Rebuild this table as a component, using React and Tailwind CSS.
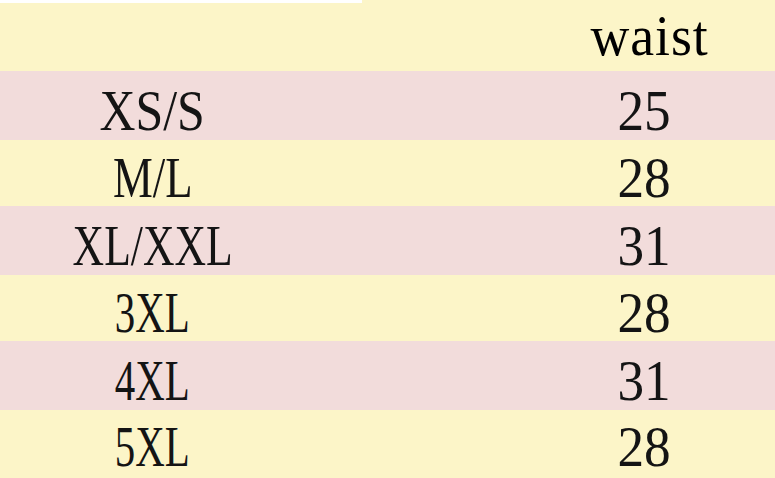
/**
 * SizeChart — waist measurements by size, striped rows.
 */

const ROWS = [
  { size: 'XS/S', waist: '25', bg: 'bg-[#f2dcdb]', h: 'h-[69px]', sx: 'scale-x-[0.89]', pt: 'pt-[10px]' },
  { size: 'M/L', waist: '28', bg: 'bg-[#fcf5c8]', h: 'h-[66px]', sx: 'scale-x-[0.8]', pt: 'pt-[10px]' },
  { size: 'XL/XXL', waist: '31', bg: 'bg-[#f2dcdb]', h: 'h-[69px]', sx: 'scale-x-[0.78]', pt: 'pt-[10px]' },
  { size: '3XL', waist: '28', bg: 'bg-[#fcf5c8]', h: 'h-[66px]', sx: 'scale-x-[0.73]', pt: 'pt-[10px]' },
  { size: '4XL', waist: '31', bg: 'bg-[#f2dcdb]', h: 'h-[69px]', sx: 'scale-x-[0.73]', pt: 'pt-[10px]' },
  { size: '5XL', waist: '28', bg: 'bg-[#fcf5c8]', h: 'h-[68px]', sx: 'scale-x-[0.73]', pt: 'pt-[6px]' },
];

export default function App() {
  return (
    <div className="w-[775px] h-[478px] overflow-hidden bg-[#fcf5c8] font-['Liberation_Serif',serif] text-[56px] leading-none text-[#141414]">
      {/* Header */}
      <div className="h-[71px] flex flex-col">
        <div className="h-[3px] w-[362px] bg-white" />
        <div className="flex-1 grid grid-cols-[305px_1fr]">
          <div />
          <div className="pl-[208px] pt-[5px] flex justify-center">
            <span className="inline-block ml-[12px] scale-x-[0.96] tracking-[1px] text-black">waist</span>
          </div>
        </div>
      </div>

      {/* Rows */}
      {ROWS.map((row) => (
        <div key={row.size} className={`${row.bg} ${row.h} grid grid-cols-[305px_1fr]`}>
          <div className={`flex items-center justify-center ${row.pt}`}>
            <span className={`inline-block ${row.sx}`}>{row.size}</span>
          </div>
          <div className={`pl-[208px] flex items-center justify-center ${row.pt}`}>
            <span className="inline-block scale-x-[0.95]">{row.waist}</span>
          </div>
        </div>
      ))}
    </div>
  );
}
